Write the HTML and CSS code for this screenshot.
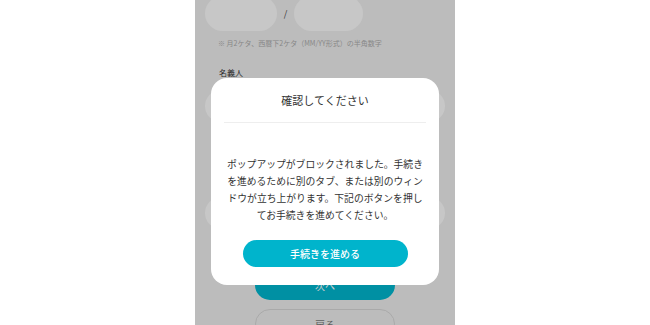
FILE: index.html
```html
<!DOCTYPE html>
<html lang="ja">
<head>
    <meta charset="utf-8">
    <title>確認してください</title>
    <link rel="stylesheet" href="styles.css">
</head>
<body>
    <div class="screen">
        <div class="form">
            <div class="expiry">
                <span class="pill"></span>
                <span class="slash">/</span>
                <span class="pill pill-short"></span>
            </div>
            <p class="note">※ 月2ケタ、西暦下2ケタ（MM/YY形式）の半角数字</p>

            <label class="label">名義人</label>
            <div class="field"></div>
            <div class="field field-second"></div>

            <div class="actions">
                <button class="btn-next">次へ</button>
                <button class="btn-back">戻る</button>
            </div>
        </div>

        <div class="overlay">
            <div class="dialog">
                <h2 class="dialog-title">確認してください</h2>
                <p class="dialog-text">ポップアップがブロックされました。手続きを進めるために別のタブ、または別のウィンドウが立ち上がります。下記のボタンを押してお手続きを進めてください。</p>
                <button class="dialog-btn">手続きを進める</button>
            </div>
        </div>
    </div>
</body>
</html>
```

FILE: styles.css
```css
body {
    margin: 0;
    background: #fff;
    font-family: "Noto Sans CJK JP", "Noto Sans", sans-serif;
    color: #333;
}
.screen {
    position: relative;
    width: 260px;
    height: 325px;
    margin: 0 auto;
    overflow: hidden;
    background: #ececec;
}
.form {
    padding: 0 10px;
}
.expiry {
    display: flex;
    align-items: center;
    margin-top: -4px;
}
.pill {
    display: block;
    width: 72px;
    height: 35px;
    border-radius: 18px;
    background: #f9f9f9;
}
.pill-short {
    width: 69px;
}
.slash {
    width: 17px;
    text-align: center;
    font-size: 9px;
    color: #444;
}
.note {
    margin: 7px 0 0;
    padding-left: 13px;
    font-size: 7px;
    line-height: 10px;
    color: #aaa;
}
.label {
    display: block;
    margin-top: 19px;
    padding-left: 14px;
    font-size: 8px;
    line-height: 12px;
    color: #333;
}
.field {
    height: 32px;
    margin-top: 11px;
    border-radius: 16px;
    background: #f9f9f9;
}
.field-second {
    margin-top: 75px;
}
.actions {
    display: flex;
    flex-direction: column;
    align-items: center;
    gap: 9px;
    margin-top: 41px;
}
.btn-next,
.btn-back {
    width: 140px;
    height: 30px;
    border-radius: 15px;
    font-family: inherit;
    font-size: 10px;
    padding: 0;
}
.btn-next {
    border: none;
    background: #00b4cc;
    color: #fff;
}
.btn-back {
    border: 1px solid #d4d4d4;
    background: #ececec;
    color: #777;
}
.overlay {
    position: absolute;
    inset: 0;
    display: flex;
    justify-content: center;
    align-items: flex-start;
    padding-top: 78px;
    background: rgba(0, 0, 0, 0.2);
}
.dialog {
    width: 228px;
    padding-bottom: 18px;
    border-radius: 16px;
    background: #fff;
}
.dialog-title {
    margin: 0 13px;
    padding: 12px 0;
    border-bottom: 1px solid #eee;
    font-size: 11px;
    font-weight: normal;
    line-height: 20px;
    text-align: center;
    color: #333;
}
.dialog-text {
    margin: 33px 15px 0;
    font-size: 9.8px;
    line-height: 17px;
    text-align: center;
    color: #333;
}
.dialog-btn {
    display: block;
    width: 165px;
    height: 27px;
    margin: 16px auto 0;
    padding: 0;
    border: none;
    border-radius: 14px;
    background: #00b4cc;
    color: #fff;
    font-family: inherit;
    font-size: 10px;
    font-weight: 500;
}
```
